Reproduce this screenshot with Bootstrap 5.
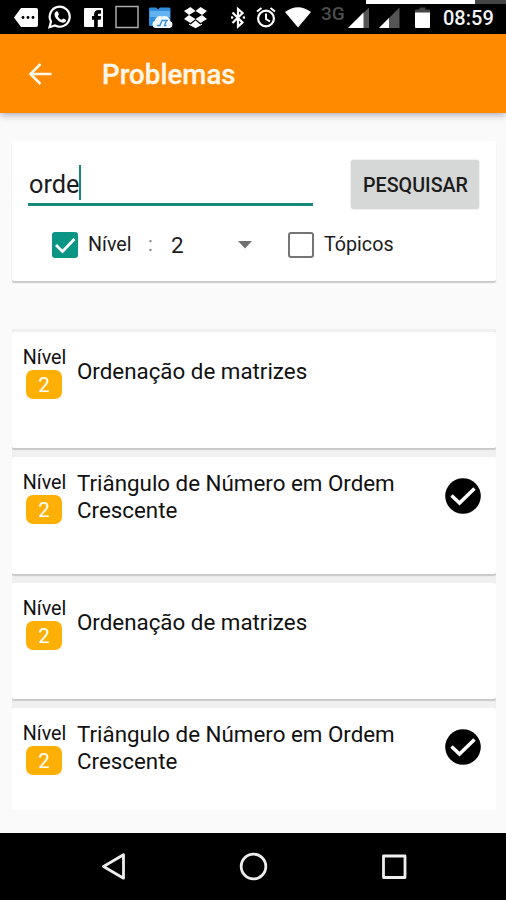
<!DOCTYPE html>
<html lang="pt-BR">
<head>
<meta charset="utf-8">
<meta name="viewport" content="width=device-width, initial-scale=1">
<title>Problemas</title>
<link href="https://cdn.jsdelivr.net/npm/bootstrap@5.3.0/dist/css/bootstrap.min.css" rel="stylesheet">
<style>
body{font-family:Roboto,"Liberation Sans",sans-serif;background:#fafafa;color:#1c1c1c;font-size:19.7px;line-height:1.172}
.screen{width:506px;height:900px}
svg{display:block;flex:none}
.status-bar{height:34px;background:#000;color:#f4f4f4;position:relative}
.status-bar svg{height:34px}
.strip{position:absolute;top:0;left:366px;right:0;height:4px;background:linear-gradient(90deg,#fff 109px,#454545 109px)}
.i-tag{margin-left:14px}.i-wa{margin-left:10px}.i-fb{margin-left:12px}.i-sq{margin-left:12px}.i-es{margin-left:9px}.i-db{margin-left:11px}
.i-bt{margin-left:24px}.i-al{margin-left:11px}.i-wf{margin-left:9px}.i-s1{margin-left:3px}.i-s2{margin-left:8px}.i-ba{margin-left:15px}
.net{font-size:19px;font-weight:500;color:#4d4d4d;width:23px;margin-left:10px;height:29px}
.clock{font-size:20px;font-weight:500;margin-left:13px;margin-top:3px}
.app-bar{height:79px;background:#ff8a00;color:#fff6ea;box-shadow:0 2px 7px rgba(40,40,70,.38);padding-left:28px;z-index:1}
.app-bar h1{font-size:27.7px;font-weight:500;margin-left:50px;margin-top:2px;-webkit-text-stroke:.3px}
.content{padding:28px 10px 0 12px}
.sheet{background:#fff;border-radius:2px;box-shadow:0 2px 1px #c9c9c9}
.search-sheet{height:140px;padding:19px 17px 0 16px}
.query{width:285px;height:46px;border-bottom:3px solid #14897a;font-size:25.3px;padding:4px 0 0 1px}
.query-text{padding-top:6px}
.caret{width:2px;height:35px;background:#14897a;margin-top:1px}
.go{width:128px;height:49px;background:#d6d8d7;border:0;border-radius:3px;font-size:19.7px;font-weight:500;color:#1c1c1c;padding:2px 0 0 1px;box-shadow:0 0 2px #ccc}
.filters{height:26px;margin-top:23px;padding-left:24px}
.box{width:26px;height:26px;border-radius:3px}
.box-on{background:#0b9584}
.box-off{border:2.500px solid #757575;margin-left:36px}
.lvl-label{margin-left:10px;width:43px}
.colon{margin-left:17px;width:7px;color:#888}
.chosen{margin-left:16px;width:14px;font-size:22.500px}
.drop{margin-left:53px}
.topic-label{margin-left:10px}
.results{margin-top:48px;height:481px;padding-top:3px;background:#f0f0f0}
.result{height:116.300px;margin-bottom:9px;padding:12px 15px 0 12px;flex:none;color:#111}
.level{width:41px;line-height:25px}
.level-text{padding-top:1px;height:25px}
.level-no{width:36px;height:29px;border-radius:7px;background:#ffb006;color:#fff;font-size:20.500px;line-height:31px;margin-top:1px;margin-right:1px}
.name{font-size:22.350px;line-height:27px;margin-left:12px;width:345px;padding-top:1px}
.one-line{padding-top:14px}
.done{margin-top:9px}
.nav-keys{height:67px;background:#000}
</style>
</head>
<body>
<div class="screen d-flex flex-column overflow-hidden">
  <div class="status-bar d-flex align-items-center flex-shrink-0">
    <div class="strip"></div>
    <svg class="i-tag" width="24" viewBox="0 0 24 34"><path d="M0 17.5 7 8h15q2 0 2 2v15q0 2-2 2H7z" fill="#fff"/><g fill="#000"><circle cx="9" cy="17.5" r="1.400"/><circle cx="14" cy="17.5" r="1.400"/><circle cx="19" cy="17.5" r="1.400"/></g></svg>
    <svg class="i-wa" width="24" viewBox="0 0 24 34"><path d="M1.500 27.200 3 21.600A10 10 0 1 1 7 25.500z" fill="none" stroke="#fff" stroke-width="2.200"/><path d="M8 11.500c1-.7 1.700-.4 2.200 1l.7 1.700c.2.600-1 1.500-1 2 .7 1.700 2 2.900 3.700 3.600.6.100 1.300-1.400 1.900-1.200l2.300 1.200c.6.400-.2 2.400-1.400 2.800-4 1-9.600-4.100-9.900-8.200 0-1.200.7-2.300 1.500-2.900z" fill="#fff"/></svg>
    <svg class="i-fb" width="19" viewBox="0 0 19 34"><path fill="#fff" fill-rule="evenodd" d="M1 8h17q1 0 1 1v17q0 1-1 1h-1.500v-7.500h-2.700V27h-3.500v-7.500H8V16h2.300v-1.600c0-2.700 1.600-4.200 4-4.200h2.600v3.200h-1.700c-1.100 0-1.400.5-1.400 1.400V16h3.100l-.4 3.500V27H1q-1 0-1-1V9q0-1 1-1z"/><path fill="#000" d="M10.300 27v-7.500H8V16h2.300v-1.600c0-2.700 1.600-4.200 4-4.200h2.600v3.200h-1.700c-1.100 0-1.400.5-1.400 1.400V16h3.100l-.4 3.500h-2.700V27z"/><path fill="#fff" d="M13.800 20H19v6q0 1-1 1h-4.200z"/></svg>
    <svg class="i-sq" width="24" viewBox="0 0 24 34"><path d="M1 6.500h22v21H1z" fill="none" stroke="#aaa" stroke-width="1.500"/></svg>
    <svg class="i-es" width="25" viewBox="0 0 25 34"><path d="M1 9q0-1.500 1.500-1.500H8l2 2L12 7.500h9q1.500 0 1.500 1.500v17H2q-1 0-1-1z" fill="#2f8ee0"/><path d="M2 11h20v6H2z" fill="#65b2f0"/><path d="M7 28a4 4 0 0 1 0-7.500 5 5 0 0 1 7-4 5.500 5.500 0 0 1 8 4.500 3.700 3.700 0 0 1 0 7z" fill="#f1f8ff"/><path d="M9 25.500h3l2-5h6M18.500 20.500l-2 5h2" fill="none" stroke="#3b91dc" stroke-width="1.400"/></svg>
    <svg class="i-db" width="23" viewBox="0 0 23 34"><path fill="#fff" d="M6.500 7 11.500 11 5 15 0 11zM16.500 7l6.500 4-5 4-6.500-4zM5 15l6.500 4-5 4L0 19zM18 15l5 4-6.500 4-5-4zM11.500 20.500l4.800 4 1.700-1v1.300l-6.500 3.500L5 24.800v-1.300l1.700 1z"/></svg>
    <svg class="i-bt" width="14" viewBox="0 0 14 34"><path d="M1.500 12.500 11.500 22.500 7 26.500V9l4.500 4L1.500 23" fill="none" stroke="#fff" stroke-width="2.200"/><circle cx="1" cy="17.500" r="1.300" fill="#fff"/><circle cx="13" cy="17.500" r="1.300" fill="#fff"/></svg>
    <svg class="i-al" width="20" viewBox="0 0 20 34"><circle cx="10" cy="18.500" r="7.900" fill="none" stroke="#fff" stroke-width="2.200"/><path d="M10 13.500v5.500l4 2.500M1 11.500 5.500 8M19 11.500 14.500 8" fill="none" stroke="#fff" stroke-width="2"/></svg>
    <svg class="i-wf" width="26" viewBox="0 0 26 34"><path d="M0 12Q13 2.500 26 12L13 27.500z" fill="#fff"/></svg>
    <span class="net">3G</span>
    <svg class="i-s1" width="23" viewBox="0 0 23 34"><path d="M22 7.500V28H1z" fill="#555"/><path d="M16.500 12.500V28H1z" fill="#fff"/></svg>
    <svg class="i-s2" width="22" viewBox="0 0 22 34"><path d="M21.500 7.500V28H1z" fill="#555"/><path d="M11 18v10H1z" fill="#fff"/></svg>
    <svg class="i-ba" width="15" viewBox="0 0 15 34"><path d="M0 10.500q0-1 1-1h3.500V7.500h6v2H14q1 0 1 1V13H0z" fill="#444"/><path d="M0 12.500h15V27q0 1-1 1H1q-1 0-1-1z" fill="#fff"/></svg>
    <span class="clock">08:59</span>
  </div>

  <header class="app-bar d-flex align-items-center flex-shrink-0 position-relative">
    <svg width="24" height="24" viewBox="0 0 24 24"><path d="M12.500 2 2.500 12l10 10M2.500 12H23.500" fill="none" stroke="currentColor" stroke-width="2.700"/></svg>
    <h1 class="mb-0">Problemas</h1>
  </header>

  <main class="content flex-grow-1">
    <section class="sheet search-sheet">
      <div class="d-flex justify-content-between">
        <div class="query d-flex"><span class="query-text">orde</span><span class="caret"></span></div>
        <button class="go" type="button">PESQUISAR</button>
      </div>
      <div class="filters d-flex align-items-center">
        <span class="box box-on"><svg width="26" height="26" viewBox="0 0 26 26"><path d="m4 13 6.500 6.500L22.500 7" fill="none" stroke="#fff" stroke-width="2.800"/></svg></span>
        <span class="lvl-label">Nível</span>
        <span class="colon">:</span>
        <span class="chosen">2</span>
        <svg class="drop" width="14" height="8" viewBox="0 0 14 8"><path d="M0 0h14L7 7.500z" fill="#707070"/></svg>
        <span class="box box-off"></span>
        <span class="topic-label">Tópicos</span>
      </div>
    </section>

    <section class="results d-flex flex-column overflow-hidden">
      <article class="sheet result d-flex align-items-start">
        <div class="level d-flex flex-column align-items-center"><span class="level-text">Nível</span><span class="level-no text-center">2</span></div>
        <div class="name one-line">Ordenação de matrizes</div>
      </article>
      <article class="sheet result d-flex align-items-start">
        <div class="level d-flex flex-column align-items-center"><span class="level-text">Nível</span><span class="level-no text-center">2</span></div>
        <div class="name">Triângulo de Número em Ordem Crescente</div>
        <svg class="ms-auto done" width="36" height="36" viewBox="0 0 36 36"><circle cx="18" cy="18" r="17.800" fill="#000"/><path d="m6.500 17.500 8 7.500L29.500 10.500" fill="none" stroke="#fff" stroke-width="3.500"/></svg>
      </article>
      <article class="sheet result d-flex align-items-start">
        <div class="level d-flex flex-column align-items-center"><span class="level-text">Nível</span><span class="level-no text-center">2</span></div>
        <div class="name one-line">Ordenação de matrizes</div>
      </article>
      <article class="sheet result d-flex align-items-start">
        <div class="level d-flex flex-column align-items-center"><span class="level-text">Nível</span><span class="level-no text-center">2</span></div>
        <div class="name">Triângulo de Número em Ordem Crescente</div>
        <svg class="ms-auto done" width="36" height="36" viewBox="0 0 36 36"><circle cx="18" cy="18" r="17.800" fill="#000"/><path d="m6.500 17.500 8 7.500L29.500 10.500" fill="none" stroke="#fff" stroke-width="3.500"/></svg>
      </article>
    </section>
  </main>

  <nav class="nav-keys flex-shrink-0 d-flex align-items-center">
    <svg width="506" height="67" viewBox="0 0 506 67" fill="none" stroke="#eee" stroke-width="2.800" stroke-linejoin="round"><path d="M103.500 33.500 123.500 21.800v23.400z"/><circle cx="253.500" cy="33.500" r="12.300"/><path d="M383.500 23h21.500v21.500h-21.500z"/></svg>
  </nav>
</div>
<script src="https://cdn.jsdelivr.net/npm/bootstrap@5.3.0/dist/js/bootstrap.bundle.min.js"></script>
</body>
</html>
